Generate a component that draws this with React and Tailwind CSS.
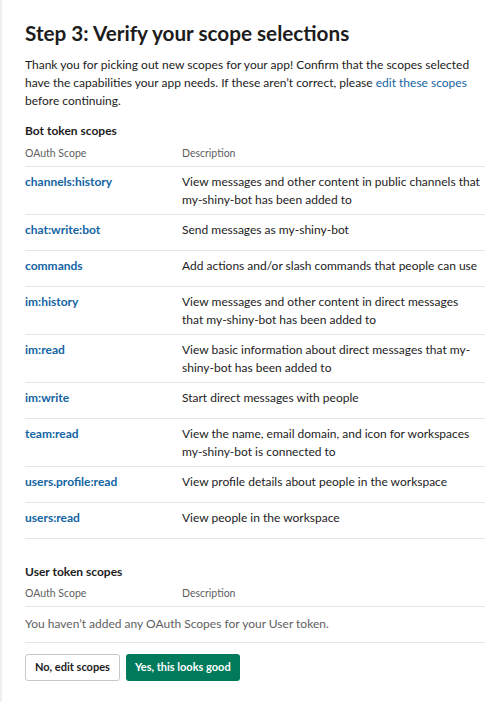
const botScopes = [
  { name: 'channels:history', desc: 'View messages and other content in public channels that my-shiny-bot has been added to' },
  { name: 'chat:write:bot', desc: 'Send messages as my-shiny-bot' },
  { name: 'commands', desc: 'Add actions and/or slash commands that people can use' },
  { name: 'im:history', desc: 'View messages and other content in direct messages that my-shiny-bot has been added to' },
  { name: 'im:read', desc: 'View basic information about direct messages that my-shiny-bot has been added to' },
  { name: 'im:write', desc: 'Start direct messages with people' },
  { name: 'team:read', desc: 'View the name, email domain, and icon for workspaces my-shiny-bot is connected to' },
  { name: 'users.profile:read', desc: 'View profile details about people in the workspace' },
  { name: 'users:read', desc: 'View people in the workspace' },
];

function TableHead() {
  return (
    <div className="flex text-[10.5px] leading-[14px] text-[#616061] pb-[6px]">
      <div className="w-[157px] shrink-0">OAuth Scope</div>
      <div>Description</div>
    </div>
  );
}

export default function App() {
  return (
    <div className="min-h-[702px] bg-white border-l-2 border-[#efefef] text-[#1d1c1d] font-['Lato','Noto_Sans',sans-serif]">
      <div className="pl-[23px] pr-[15px] pt-[18px]">
        {/* Title */}
        <h1 className="text-[20.7px] leading-[30px] font-bold">Step 3: Verify your scope selections</h1>
        <p className="mt-[8px] text-[12px] leading-[18px]">
          Thank you for picking out new scopes for your app! Confirm that the scopes selected have the capabilities your app needs. If these aren’t correct, please{' '}
          <a className="text-[#1264a3]" href="#">edit these scopes</a> before continuing.
        </p>

        {/* Bot token scopes */}
        <h2 className="mt-[12px] text-[12px] leading-[18px] font-bold">Bot token scopes</h2>
        <div className="mt-[6px]">
          <TableHead />
          {botScopes.map((s) => (
            <div key={s.name} className="flex border-t border-[#e5e5e5] min-h-[36px] pt-[6px] pb-[5px] text-[12px] leading-[18px]">
              <div className="w-[157px] shrink-0 font-bold text-[#1264a3]">{s.name}</div>
              <div className="flex-1 pr-[4px]">{s.desc}</div>
            </div>
          ))}
          <div className="border-t border-[#e5e5e5]" />
        </div>

        {/* User token scopes */}
        <h2 className="mt-[24px] text-[12px] leading-[18px] font-bold">User token scopes</h2>
        <div className="mt-[5px]">
          <TableHead />
          <div className="border-t border-[#e5e5e5] pt-[8px] pb-[9px] text-[12px] leading-[18px] text-[#616061]">
            You haven’t added any OAuth Scopes for your User token.
          </div>
          <div className="border-t border-[#e5e5e5]" />
        </div>

        {/* Actions */}
        <div className="mt-[11px] flex gap-[6px]">
          <button className="h-[27px] px-[9px] rounded-[3px] border border-[#c8c8c8] bg-white text-[11px] font-bold text-[#1d1c1d]">No, edit scopes</button>
          <button className="h-[27px] px-[9px] rounded-[3px] bg-[#007a5a] text-[11px] font-bold text-white">Yes, this looks good</button>
        </div>
      </div>
    </div>
  );
}
